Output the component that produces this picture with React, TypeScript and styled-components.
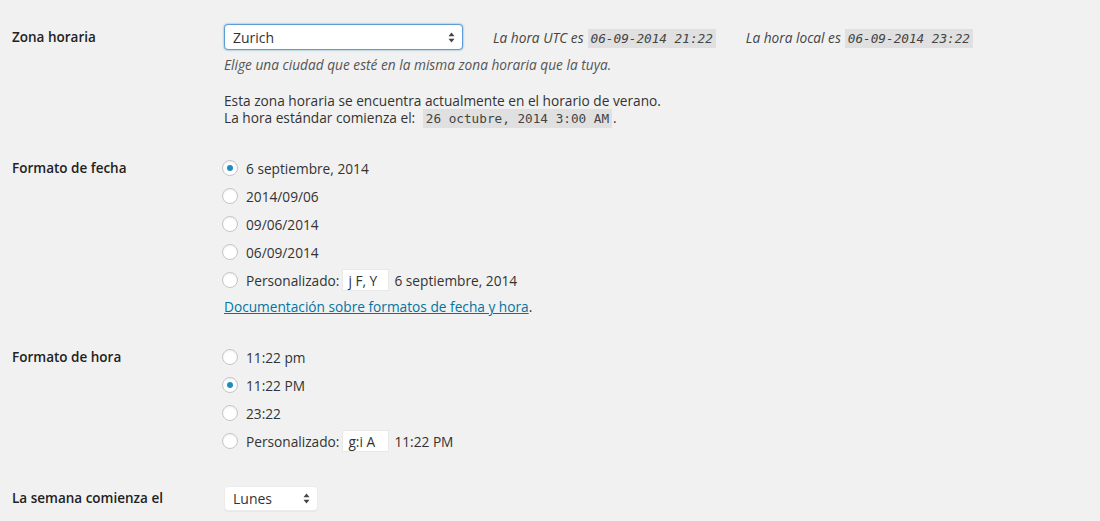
import React from "react";
import styled, { createGlobalStyle } from "styled-components";

const GlobalStyle = createGlobalStyle`
  html, body {
    margin: 0;
    padding: 0;
    background: #f1f1f1;
  }
  body {
    font-family: "Open Sans", "Liberation Sans", sans-serif;
    font-size: 13.7px;
    color: #444;
  }
`;

const Page = styled.div`
  width: 1100px;
  height: 521px;
  overflow: hidden;
  box-sizing: border-box;
  padding: 24px 0 0 12px;
  display: flex;
  flex-direction: column;
`;

const Row = styled.div<{ $gap: number }>`
  display: grid;
  grid-template-columns: 212px 1fr;
  margin-bottom: ${(p) => p.$gap}px;
`;

const Label = styled.div<{ $lh: number }>`
  font-weight: 600;
  font-size: 13.5px;
  color: #222;
  line-height: ${(p) => p.$lh}px;
`;

const Field = styled.div`
  display: flex;
  flex-direction: column;
  align-items: flex-start;
`;

const InlineLine = styled.div`
  display: flex;
  align-items: center;
  height: 26px;
`;

const SelectBox = styled.div<{ $w: number; $focus?: boolean }>`
  width: ${(p) => p.$w}px;
  height: ${(p) => (p.$focus ? 26 : 25)}px;
  box-sizing: border-box;
  display: flex;
  align-items: center;
  justify-content: space-between;
  padding: 0 7px 0 8px;
  background: #fff;
  border-radius: 4px;
  border: 1px solid ${(p) => (p.$focus ? "#5b9dd9" : "#ececec")};
  box-shadow: ${(p) =>
    p.$focus ? "0 0 2px rgba(30,140,190,.8)" : "0 1px 1px rgba(0,0,0,.04)"};
  color: #333;
  font-size: 14px;
`;

const TimeInfo = styled.span<{ $ml: number }>`
  margin-left: ${(p) => p.$ml}px;
  font-style: italic;
  color: #444;
`;

const Code = styled.code`
  font-family: "DejaVu Sans Mono", "Liberation Mono", monospace;
  font-size: 12.7px;
  background: rgba(0, 0, 0, 0.07);
  padding: 2px 3px;
  margin: 0 1px 0 4px;
  color: #444;
`;

const Description = styled.p`
  margin: 6px 0 0;
  line-height: 18px;
  font-style: italic;
  color: #555;
`;

const Para = styled.p`
  margin: 18px 0 0;
  line-height: 17px;
  color: #333;
`;

const RadioLine = styled.label`
  display: flex;
  align-items: center;
  height: 28px;
  color: #333;
`;

const Radio = styled.span<{ $on?: boolean }>`
  width: 16px;
  height: 16px;
  box-sizing: border-box;
  margin: 0 8px 0 -2px;
  border-radius: 50%;
  border: 1px solid #c3c6c9;
  background: #fff;
  box-shadow: inset 0 1px 2px rgba(0, 0, 0, 0.07);
  display: flex;
  align-items: center;
  justify-content: center;
  &::after {
    content: "";
    display: ${(p) => (p.$on ? "block" : "none")};
    width: 6px;
    height: 6px;
    border-radius: 50%;
    background: #1e8cbe;
  }
`;

const SmallInput = styled.span`
  display: inline-flex;
  align-items: center;
  width: 47px;
  height: 22px;
  box-sizing: border-box;
  margin: 0 5px 0 3px;
  padding-left: 5px;
  background: #fff;
  border: 1px solid #e8e8e8;
  color: #333;
`;

const DocLink = styled.p`
  margin: 4px 0 0;
  line-height: 18px;
  color: #333;
  a {
    color: #0074a2;
    text-decoration: underline;
  }
`;

const Arrows = () => (
  <svg width="7" height="11" viewBox="0 0 7 11">
    <path d="M3.5 0.5 L6.5 4.3 L0.5 4.3 Z" fill="#444" />
    <path d="M3.5 10.5 L6.5 6.7 L0.5 6.7 Z" fill="#444" />
  </svg>
);

const dateFormats = ["6 septiembre, 2014", "2014/09/06", "09/06/2014", "06/09/2014"];
const timeFormats = ["11:22 pm", "11:22 PM", "23:22"];

export default function App() {
  return (
    <>
      <GlobalStyle />
      <Page>
        <Row $gap={27}>
          <Label $lh={26}>Zona horaria</Label>
          <Field>
            <InlineLine>
              <SelectBox $w={239} $focus>
                <span>Zurich</span>
                <Arrows />
              </SelectBox>
              <TimeInfo $ml={30}>
                La hora UTC es<Code>06-09-2014 21:22</Code>
              </TimeInfo>
              <TimeInfo $ml={29}>
                La hora local es<Code>06-09-2014 23:22</Code>
              </TimeInfo>
            </InlineLine>
            <Description>
              Elige una ciudad que esté en la misma zona horaria que la tuya.
            </Description>
            <Para>
              Esta zona horaria se encuentra actualmente en el horario de verano.
              <br />
              La hora estándar comienza el: <Code>26 octubre, 2014 3:00 AM</Code>.
            </Para>
          </Field>
        </Row>

        <Row $gap={27}>
          <Label $lh={28}>Formato de fecha</Label>
          <Field>
            {dateFormats.map((f, i) => (
              <RadioLine key={f}>
                <Radio $on={i === 0} />
                {f}
              </RadioLine>
            ))}
            <RadioLine>
              <Radio />
              Personalizado:
              <SmallInput>j F, Y</SmallInput>
              6 septiembre, 2014
            </RadioLine>
            <DocLink>
              <a href="#">Documentación sobre formatos de fecha y hora</a>.
            </DocLink>
          </Field>
        </Row>

        <Row $gap={31}>
          <Label $lh={28}>Formato de hora</Label>
          <Field>
            {timeFormats.map((f, i) => (
              <RadioLine key={f}>
                <Radio $on={i === 1} />
                {f}
              </RadioLine>
            ))}
            <RadioLine>
              <Radio />
              Personalizado:
              <SmallInput>g:i A</SmallInput>
              11:22 PM
            </RadioLine>
          </Field>
        </Row>

        <Row $gap={0}>
          <Label $lh={25}>La semana comienza el</Label>
          <Field>
            <SelectBox $w={94}>
              <span>Lunes</span>
              <Arrows />
            </SelectBox>
          </Field>
        </Row>
      </Page>
    </>
  );
}
